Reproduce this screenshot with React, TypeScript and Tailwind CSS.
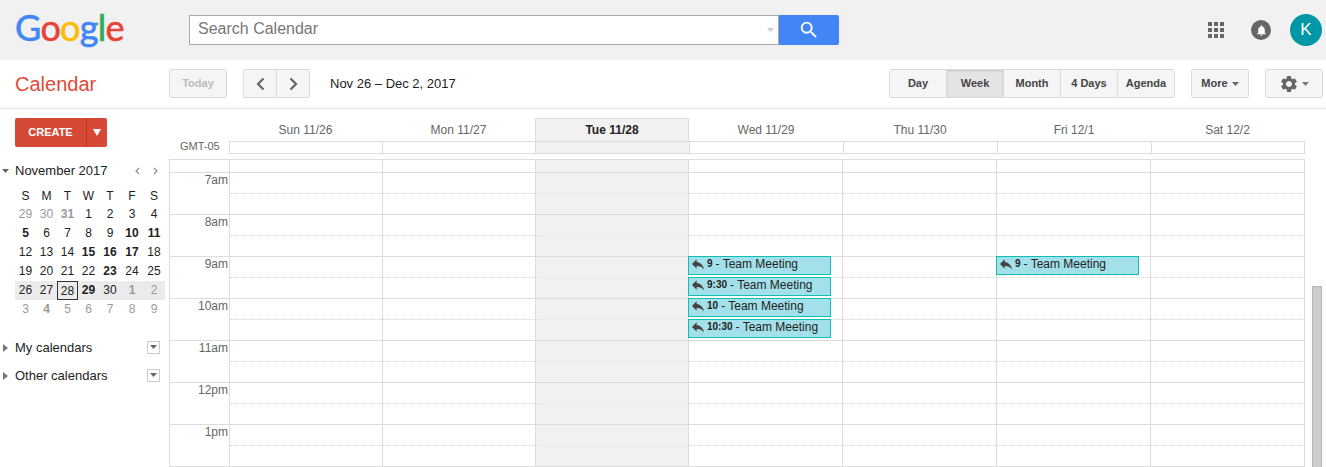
import { MdSearch, MdNotifications, MdSettings, MdReply } from 'react-icons/md';

const headerCols = 'grid grid-cols-[153px_153px_154px_154px_154px_154px_153px]';
const timeCols = 'grid grid-cols-[153px_153px_153px_154px_154px_154px_154px]';
const miniCols = 'grid grid-cols-[21px_21px_21px_21px_22px_22px_22px]';

const days = ['Sun 11/26', 'Mon 11/27', 'Tue 11/28', 'Wed 11/29', 'Thu 11/30', 'Fri 12/1', 'Sat 12/2'];
const hours = ['7am', '8am', '9am', '10am', '11am', '12pm', '1pm'];

type MiniDay = { n: number; muted?: boolean; bold?: boolean };
const miniWeeks: MiniDay[][] = [
    [{ n: 29, muted: true }, { n: 30, muted: true }, { n: 31, muted: true, bold: true }, { n: 1 }, { n: 2 }, { n: 3 }, { n: 4 }],
    [{ n: 5, bold: true }, { n: 6 }, { n: 7 }, { n: 8 }, { n: 9 }, { n: 10, bold: true }, { n: 11, bold: true }],
    [{ n: 12 }, { n: 13 }, { n: 14 }, { n: 15, bold: true }, { n: 16, bold: true }, { n: 17, bold: true }, { n: 18 }],
    [{ n: 19 }, { n: 20 }, { n: 21 }, { n: 22 }, { n: 23, bold: true }, { n: 24 }, { n: 25 }],
    [{ n: 26 }, { n: 27 }, { n: 28 }, { n: 29, bold: true }, { n: 30 }, { n: 1, muted: true, bold: true }, { n: 2, muted: true }],
    [{ n: 3, muted: true }, { n: 4, muted: true, bold: true }, { n: 5, muted: true }, { n: 6, muted: true }, { n: 7, muted: true }, { n: 8, muted: true }, { n: 9, muted: true }],
];

const Caret = ({ className }: { className: string }) => (
    <svg width="7" height="4" viewBox="0 0 7 4" className={className}>
        <polygon points="0,0 7,0 3.5,4" fill="currentColor" />
    </svg>
);

const ToolButton = ({ label, active, last }: { label: string; active?: boolean; last?: boolean }) => (
    <div
        className={`h-full flex items-center justify-center text-[11px] font-bold text-[#444] ${last ? 'w-[56px]' : 'w-[57px] border-r border-[#dcdcdc]'} ${active ? 'bg-[#e4e4e4] shadow-[inset_0_1px_2px_rgba(0,0,0,0.15)] text-[#333]' : 'bg-[#f5f5f5]'}`}
    >
        {label}
    </div>
);

const Header = () => (
    <header className="h-[60px] bg-[#f1f1f1] flex items-center shrink-0">
        <div className="w-[189px] pl-[15px] pb-[6px] font-['Lato',sans-serif] text-[36px] leading-none tracking-[-0.7px] [-webkit-text-stroke:0.6px]">
            <span className="text-[#4285f4]">G</span>
            <span className="text-[#ea4335]">o</span>
            <span className="text-[#fbbc05]">o</span>
            <span className="text-[#4285f4]">g</span>
            <span className="text-[#34a853]">l</span>
            <span className="text-[#ea4335]">e</span>
        </div>
        <div className="w-[590px] h-[30px] bg-white border border-[#a9a9a9] flex items-center pl-[8px] pr-[4px] pb-[2px] text-[16px] text-[#777]">
            <span className="flex-1">Search Calendar</span>
            <Caret className="text-[#ccc] mt-[2px]" />
        </div>
        <div className="w-[60px] h-[30px] bg-[#4285f4] flex items-center justify-center text-white rounded-r-[2px]">
            <MdSearch size={22} />
        </div>
        <div className="flex-1" />
        <svg width="16" height="16" viewBox="0 0 16 16" fill="#666" className="mr-[27px]">
            <rect x="0" y="0" width="4" height="4" />
            <rect x="6" y="0" width="4" height="4" />
            <rect x="12" y="0" width="4" height="4" />
            <rect x="0" y="6" width="4" height="4" />
            <rect x="6" y="6" width="4" height="4" />
            <rect x="12" y="6" width="4" height="4" />
            <rect x="0" y="12" width="4" height="4" />
            <rect x="6" y="12" width="4" height="4" />
            <rect x="12" y="12" width="4" height="4" />
        </svg>
        <div className="w-[20px] h-[20px] rounded-full bg-[#666] flex items-center justify-center text-white mr-[19px]">
            <MdNotifications size={13} />
        </div>
        <div className="w-[32px] h-[32px] rounded-full bg-[#0097a7] flex items-center justify-center text-white text-[17px] mr-[4px]">K</div>
    </header>
);

const Toolbar = () => (
    <div className="h-[49px] border-b border-[#e5e5e5] flex items-start pt-[9px] pr-[3px] shrink-0">
        <div className="w-[169px] pl-[15px] text-[20px] leading-[31px] text-[#dd4b39]">Calendar</div>
        <div className="w-[58px] h-[29px] bg-[#f5f5f5] border border-[#dcdcdc] rounded-[2px] flex items-center justify-center text-[11px] font-bold text-[#bbb]">Today</div>
        <div className="ml-[16px] h-[29px] flex border border-[#dcdcdc] rounded-[2px] bg-[#f5f5f5]">
            <div className="w-[33px] border-r border-[#dcdcdc] flex items-center justify-center">
                <svg width="9" height="14" viewBox="0 0 9 14" fill="none" stroke="#666" strokeWidth="2.2"><path d="M7.5 1.5 2 7l5.5 5.5" /></svg>
            </div>
            <div className="w-[32px] flex items-center justify-center">
                <svg width="9" height="14" viewBox="0 0 9 14" fill="none" stroke="#666" strokeWidth="2.2"><path d="M1.5 1.5 7 7l-5.5 5.5" /></svg>
            </div>
        </div>
        <div className="ml-[20px] text-[13px] leading-[29px] text-[#222]">Nov 26 – Dec 2, 2017</div>
        <div className="flex-1" />
        <div className="h-[29px] flex border border-[#dcdcdc] rounded-[2px] overflow-hidden">
            <ToolButton label="Day" />
            <ToolButton label="Week" active />
            <ToolButton label="Month" />
            <ToolButton label="4 Days" />
            <ToolButton label="Agenda" last />
        </div>
        <div className="ml-[16px] w-[58px] h-[29px] bg-[#f5f5f5] border border-[#dcdcdc] rounded-[2px] flex items-center justify-center gap-[4px] text-[11px] font-bold text-[#444]">
            More
            <Caret className="text-[#666]" />
        </div>
        <div className="ml-[16px] w-[58px] h-[29px] bg-[#f5f5f5] border border-[#dcdcdc] rounded-[2px] flex items-center justify-center gap-[3px] text-[#666]">
            <MdSettings size={20} />
            <Caret className="text-[#777]" />
        </div>
    </div>
);

const MiniCalendar = () => (
    <div className="mt-[14px]">
        <div className="h-[19px] flex items-center pl-[2px] pr-[11px] text-[13px] text-[#222]">
            <Caret className="text-[#666] mr-[6px]" />
            <span className="flex-1">November 2017</span>
            <svg width="5" height="8" viewBox="0 0 5 8" fill="none" stroke="#888" strokeWidth="1.1" className="mr-[13px]"><path d="M4 1 1 4l3 3" /></svg>
            <svg width="5" height="8" viewBox="0 0 5 8" fill="none" stroke="#888" strokeWidth="1.1"><path d="M1 1l3 3-3 3" /></svg>
        </div>
        <div className="mt-[6px] ml-[15px] w-[150px] text-[12px] text-[#222]">
            <div className={`${miniCols} h-[19px] items-center text-center`}>
                {['S', 'M', 'T', 'W', 'T', 'F', 'S'].map((d, i) => (
                    <span key={i}>{d}</span>
                ))}
            </div>
            {miniWeeks.map((week, w) => (
                <div key={w} className={`${miniCols} h-[19px] items-center text-center ${w === 4 ? 'bg-[#ebebeb]' : ''}`}>
                    {week.map((d, i) => (
                        <span
                            key={i}
                            className={`h-[19px] leading-[18px] ${d.muted ? 'text-[#999]' : ''} ${d.bold ? 'font-bold' : ''} ${w === 4 && i === 2 ? 'border border-[#333]' : ''}`}
                        >
                            {d.n}
                        </span>
                    ))}
                </div>
            ))}
        </div>
    </div>
);

const SideRow = ({ label, className }: { label: string; className: string }) => (
    <div className={`h-[20px] flex items-center pl-[3px] text-[13px] text-[#222] ${className}`}>
        <svg width="5" height="8" viewBox="0 0 5 8" className="mr-[7px]"><polygon points="0,0 5,4 0,8" fill="#777" /></svg>
        <span className="w-[132px]">{label}</span>
        <div className="w-[13px] h-[13px] -mt-[2px] border border-[#ccc] flex items-center justify-center">
            <Caret className="text-[#666]" />
        </div>
    </div>
);

const Sidebar = () => (
    <aside className="w-[169px] pt-[9px] shrink-0">
        <div className="ml-[15px] w-[92px] h-[29px] bg-[#d64937] rounded-[2px] flex items-center text-white text-[11px] font-bold">
            <span className="w-[71px] text-center">CREATE</span>
            <div className="flex-1 h-full border-l border-[#c23321] flex items-center justify-center">
                <svg width="8" height="7" viewBox="0 0 8 7"><polygon points="0,0 8,0 4,7" fill="#fff" /></svg>
            </div>
        </div>
        <MiniCalendar />
        <SideRow label="My calendars" className="mt-[19px]" />
        <SideRow label="Other calendars" className="mt-[8px]" />
    </aside>
);

const Event = ({ time, index }: { time: string; index: number }) => {
    const offset = ['top-[96px]', 'top-[117px]', 'top-[138px]', 'top-[159px]'][index];
    return (
        <div className={`absolute -left-px ${offset} w-[143px] h-[19px] bg-[#a2e1e9] border border-[#0fbfb4] flex items-center pl-[1px] text-[12px] leading-[16px] text-[#222] pb-[3px] whitespace-nowrap z-10`}>
            <MdReply size={16} className="text-[#444] mr-[1px]" />
            <span className="text-[10px] font-bold mr-[3px]">{time}</span>- Team Meeting
        </div>
    );
};

const CalendarGrid = () => (
    <section className="w-[1136px] pt-[9px] shrink-0">
        <div className="flex pl-[60px]">
            <div className={`${headerCols} w-[1075px] h-[23px]`}>
                {days.map((d, i) => (
                    <div
                        key={d}
                        className={`flex items-center justify-center text-[12px] ${i === 2 ? 'bg-[#f1f1f1] border-l border-r border-t border-[#ddd] font-bold text-[#222]' : 'text-[#666]'}`}
                    >
                        {d}
                    </div>
                ))}
            </div>
        </div>
        <div className="flex h-[13px]">
            <div className="w-[60px] pl-[11px] text-[11px] leading-[10px] text-[#666]">GMT-05</div>
            <div className={`${headerCols} w-[1076px] border-t border-b border-r border-[#ddd] h-[13px]`}>
                {days.map((d, i) => (
                    <div key={d} className={`border-l border-[#ddd] ${i === 2 ? 'bg-[#f1f1f1]' : ''}`} />
                ))}
            </div>
        </div>
        <div className="mt-[5px] flex border-l border-r border-t border-[#ddd] h-[308px] overflow-hidden">
            <div className="w-[59px] shrink-0 text-[12px] text-[#666] text-right">
                <div className="h-[13px] border-b border-[#ddd]" />
                {hours.map((h) => (
                    <div key={h} className="h-[42px] border-b border-[#ddd] pr-[1px] leading-[15px]">{h}</div>
                ))}
            </div>
            <div className={`${timeCols} w-[1075px]`}>
                {days.map((d, i) => (
                    <div key={d} className={`relative border-l border-[#ddd] ${i === 2 ? 'bg-[#f1f1f1]' : ''}`}>
                        <div className="h-[13px] border-b border-[#ddd]" />
                        {hours.map((h) => (
                            <div key={h} className="h-[42px] border-b border-[#ddd]">
                                <div className={`h-[21px] border-b border-dotted ${i === 2 ? 'border-[#e6e6e6]' : 'border-[#d8d8d8]'}`} />
                            </div>
                        ))}
                        {i === 3 && (
                            <>
                                <Event time="9" index={0} />
                                <Event time="9:30" index={1} />
                                <Event time="10" index={2} />
                                <Event time="10:30" index={3} />
                            </>
                        )}
                        {i === 5 && <Event time="9" index={0} />}
                    </div>
                ))}
            </div>
        </div>
    </section>
);

const App = () => (
    <div className="w-[1326px] h-[467px] overflow-hidden bg-white flex flex-col font-['Liberation_Sans',Arial,sans-serif]">
        <Header />
        <Toolbar />
        <div className="flex flex-1 min-h-0">
            <Sidebar />
            <CalendarGrid />
            <div className="ml-[7px] mt-[177px] w-[10px] bg-[#cdcdcd] border-l border-r border-t border-[#b8b8b8]" />
        </div>
    </div>
);

export default App;
